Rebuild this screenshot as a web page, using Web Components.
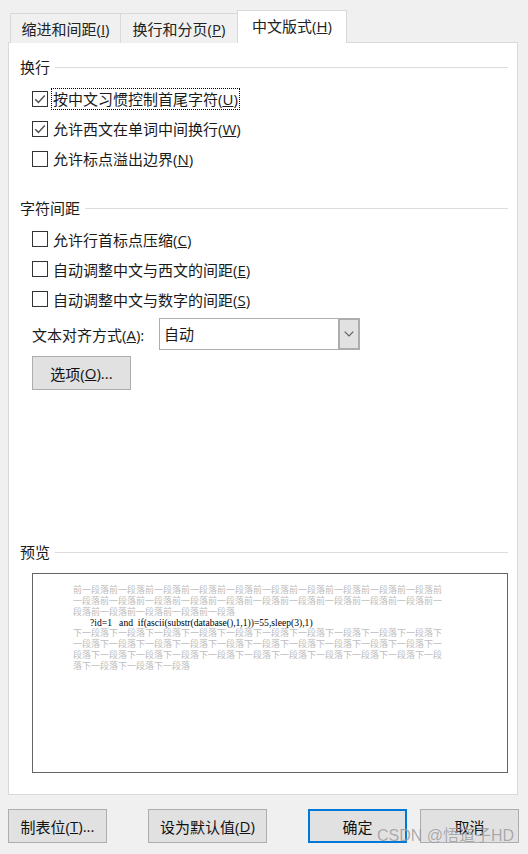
<!DOCTYPE html>
<html lang="zh">
<head>
<meta charset="utf-8">
<title>段落</title>
<style>
  html, body { margin: 0; padding: 0; }
  body {
    width: 528px;
    height: 854px;
    overflow: hidden;
    background: #f0f0f0;
    color: #1a1a1a;
    font: 15px "Open Sans", "Noto Sans CJK SC", sans-serif;
  }
</style>
</head>
<body>
<para-dialog>
  <dialog-tab slot="tabs" style="--w:111px"><span>缩进和间距(<u>I</u>)</span></dialog-tab>
  <dialog-tab slot="tabs" style="--w:118px"><span>换行和分页(<u>P</u>)</span></dialog-tab>
  <dialog-tab slot="tabs" active style="--w:110px"><span>中文版式(<u>H</u>)</span></dialog-tab>

  <group-head style="--bottom:9px">换行</group-head>
  <check-row style="--lift:-2px" checked focused>按中文习惯控制首尾字符(<u>U</u>)</check-row>
  <check-row style="--lift:-2px" checked>允许西文在单词中间换行(<u>W</u>)</check-row>
  <check-row style="--lift:-2px">允许标点溢出边界(<u>N</u>)</check-row>

  <group-head style="--top:24px;--bottom:8px">字符间距</group-head>
  <check-row>允许行首标点压缩(<u>C</u>)</check-row>
  <check-row>自动调整中文与西文的间距(<u>E</u>)</check-row>
  <check-row>自动调整中文与数字的间距(<u>S</u>)</check-row>

  <combo-row value="自动">文本对齐方式(<u>A</u>):</combo-row>
  <dialog-button style="--w:99px;margin:6px 0 0 12px">选项(<u>O</u>)...</dialog-button>

  <group-head style="--top:153px">预览</group-head>
  <para-preview></para-preview>

  <dialog-button slot="footer" style="--w:99px">制表位(<u>T</u>)...</dialog-button>
  <dialog-button slot="footer" style="--w:119px;margin-left:41px">设为默认值(<u>D</u>)</dialog-button>
  <dialog-button slot="footer" primary style="--w:99px;margin-left:41px">确定</dialog-button>
  <dialog-button slot="footer" style="--w:99px;margin-left:13px">取消</dialog-button>
</para-dialog>

<script>
class ParaDialog extends HTMLElement {
  constructor() {
    super();
    this.attachShadow({ mode: 'open' });
    this.shadowRoot.innerHTML = `
      <style>
        :host { display: flex; flex-direction: column; position: relative; height: 854px; padding: 10px 0 0 8px; box-sizing: border-box; }
        .tabs { display: flex; height: 33px; padding-left: 2px; position: relative; z-index: 1; margin-bottom: -1px; }
        .panel {
          width: 510px; height: 753px; box-sizing: border-box;
          background: #fff; border: 1px solid #d9d9d9; padding: 15px 9px 0 11px;
          display: flex; flex-direction: column;
        }
        .footer { display: flex; margin-top: 14px; height: 34px; }
        .mark {
          position: absolute; left: 377px; top: 825px;
          font: 16px/22px "Liberation Sans", "Noto Sans CJK SC", sans-serif;
          color: rgba(120,120,120,.62); white-space: nowrap;
          text-shadow: 0 0 1px rgba(255,255,255,.6);
        }
      </style>
      <div class="tabs"><slot name="tabs"></slot></div>
      <div class="panel"><slot></slot></div>
      <div class="footer"><slot name="footer"></slot></div>
      <div class="mark">CSDN @悟道子HD</div>
    `;
  }
}

class DialogTab extends HTMLElement {
  constructor() {
    super();
    this.attachShadow({ mode: 'open' });
    this.shadowRoot.innerHTML = `
      <style>
        :host {
          display: flex; align-items: center; justify-content: center;
          width: var(--w); box-sizing: border-box; margin-top: 3px; height: 30px;
          background: #f0f0f0; border: 1px solid #d9d9d9; border-bottom: 0; margin-left: -1px;
          white-space: nowrap; color: #222;
        }
        :host(:first-child) { margin-left: 0; }
        :host([active]) { margin-top: 0; height: 33px; background: #fff; padding-bottom: 3px; z-index: 2; position: relative; }
      </style>
      <slot></slot>
    `;
  }
}

class GroupHead extends HTMLElement {
  constructor() {
    super();
    this.attachShadow({ mode: 'open' });
    this.shadowRoot.innerHTML = `
      <style>
        :host { display: flex; align-items: center; height: 18px; gap: 5px; margin-top: var(--top, 0); margin-bottom: var(--bottom, 0); white-space: nowrap; }
        span { margin-top: -2px; }
        i { flex: 1; height: 1px; background: #dcdcdc; }
      </style>
      <span><slot></slot></span><i></i>
    `;
  }
}

class CheckRow extends HTMLElement {
  constructor() {
    super();
    this.attachShadow({ mode: 'open' });
    const tick = this.hasAttribute('checked')
      ? '<svg width="14" height="14" viewBox="0 0 14 14"><path d="M2.2 7.2 5.4 10.4 11.8 3.4" fill="none" stroke="#555" stroke-width="1.5"/></svg>'
      : '';
    this.shadowRoot.innerHTML = `
      <style>
        :host { display: flex; align-items: center; height: 30px; padding-left: 12px; white-space: nowrap; }
        .box { width: 16px; height: 16px; box-sizing: border-box; border: 1px solid #333; background: #fff; margin-top: -2px; }
        .box svg { display: block; margin: 0; }
        .label { margin: var(--lift, 0) 0 0 3px; padding: 0 1px; height: 22px; line-height: 21px; box-sizing: border-box; border: 1px solid transparent; }
        :host([focused]) .label { border: 1px dotted #000; }
      </style>
      <span class="box">${tick}</span>
      <span class="label"><slot></slot></span>
    `;
  }
}

class ComboRow extends HTMLElement {
  constructor() {
    super();
    this.attachShadow({ mode: 'open' });
    this.shadowRoot.innerHTML = `
      <style>
        :host { display: flex; align-items: center; height: 32px; margin-top: 3px; padding-left: 12px; white-space: nowrap; }
        .lab { width: 127px; }
        .combo { width: 201px; height: 32px; box-sizing: border-box; border: 1px solid #adadad; display: flex; background: #fff; }
        .val { flex: 1; padding-left: 4px; line-height: 31px; }
        .btn { width: 22px; margin: -1px -1px -1px 0; background: #e1e1e1; border: 2px solid #adadad; box-sizing: border-box; display: flex; align-items: center; justify-content: center; }
      </style>
      <span class="lab"><slot></slot></span>
      <div class="combo">
        <span class="val">${this.getAttribute('value')}</span>
        <span class="btn"><svg width="10" height="6" viewBox="0 0 10 6"><path d="M.7.7 5 5 9.3.7" fill="none" stroke="#606060" stroke-width="1.2"/></svg></span>
      </div>
    `;
  }
}

class DialogButton extends HTMLElement {
  constructor() {
    super();
    this.attachShadow({ mode: 'open' });
    this.shadowRoot.innerHTML = `
      <style>
        :host {
          display: flex; align-items: center; justify-content: center;
          width: var(--w); height: 34px; box-sizing: border-box; flex: none;
          background: #e1e1e1; border: 1px solid #adadad; white-space: nowrap; color: #111;
        }
        :host([primary]) { border: 2px solid #0078d7; }
      </style>
      <slot></slot>
    `;
  }
}

class ParaPreview extends HTMLElement {
  constructor() {
    super();
    this.attachShadow({ mode: 'open' });
    const before = '前一段落'.repeat(25);
    const after = '下一段落'.repeat(34);
    this.shadowRoot.innerHTML = `
      <style>
        :host { display: block; width: 476px; height: 200px; margin: 12px 0 0 12px; box-sizing: border-box; border: 1px solid #646464; background: #fff; padding: 11px 0 0 40px; }
        .para { width: 369px; font: 9px/10.85px "Noto Sans CJK SC", sans-serif; color: #bdbdbd; word-break: break-all; }
        .code { font: 9.6px/10.85px "Liberation Serif", serif; color: #000; padding-left: 17px; white-space: pre; }
      </style>
      <div class="para">${before}</div>
      <div class="code">?id=1   and  if(ascii(substr(database(),1,1))=55,sleep(3),1)</div>
      <div class="para">${after}</div>
    `;
  }
}

customElements.define('para-dialog', ParaDialog);
customElements.define('dialog-tab', DialogTab);
customElements.define('group-head', GroupHead);
customElements.define('check-row', CheckRow);
customElements.define('combo-row', ComboRow);
customElements.define('dialog-button', DialogButton);
customElements.define('para-preview', ParaPreview);
</script>
</body>
</html>
